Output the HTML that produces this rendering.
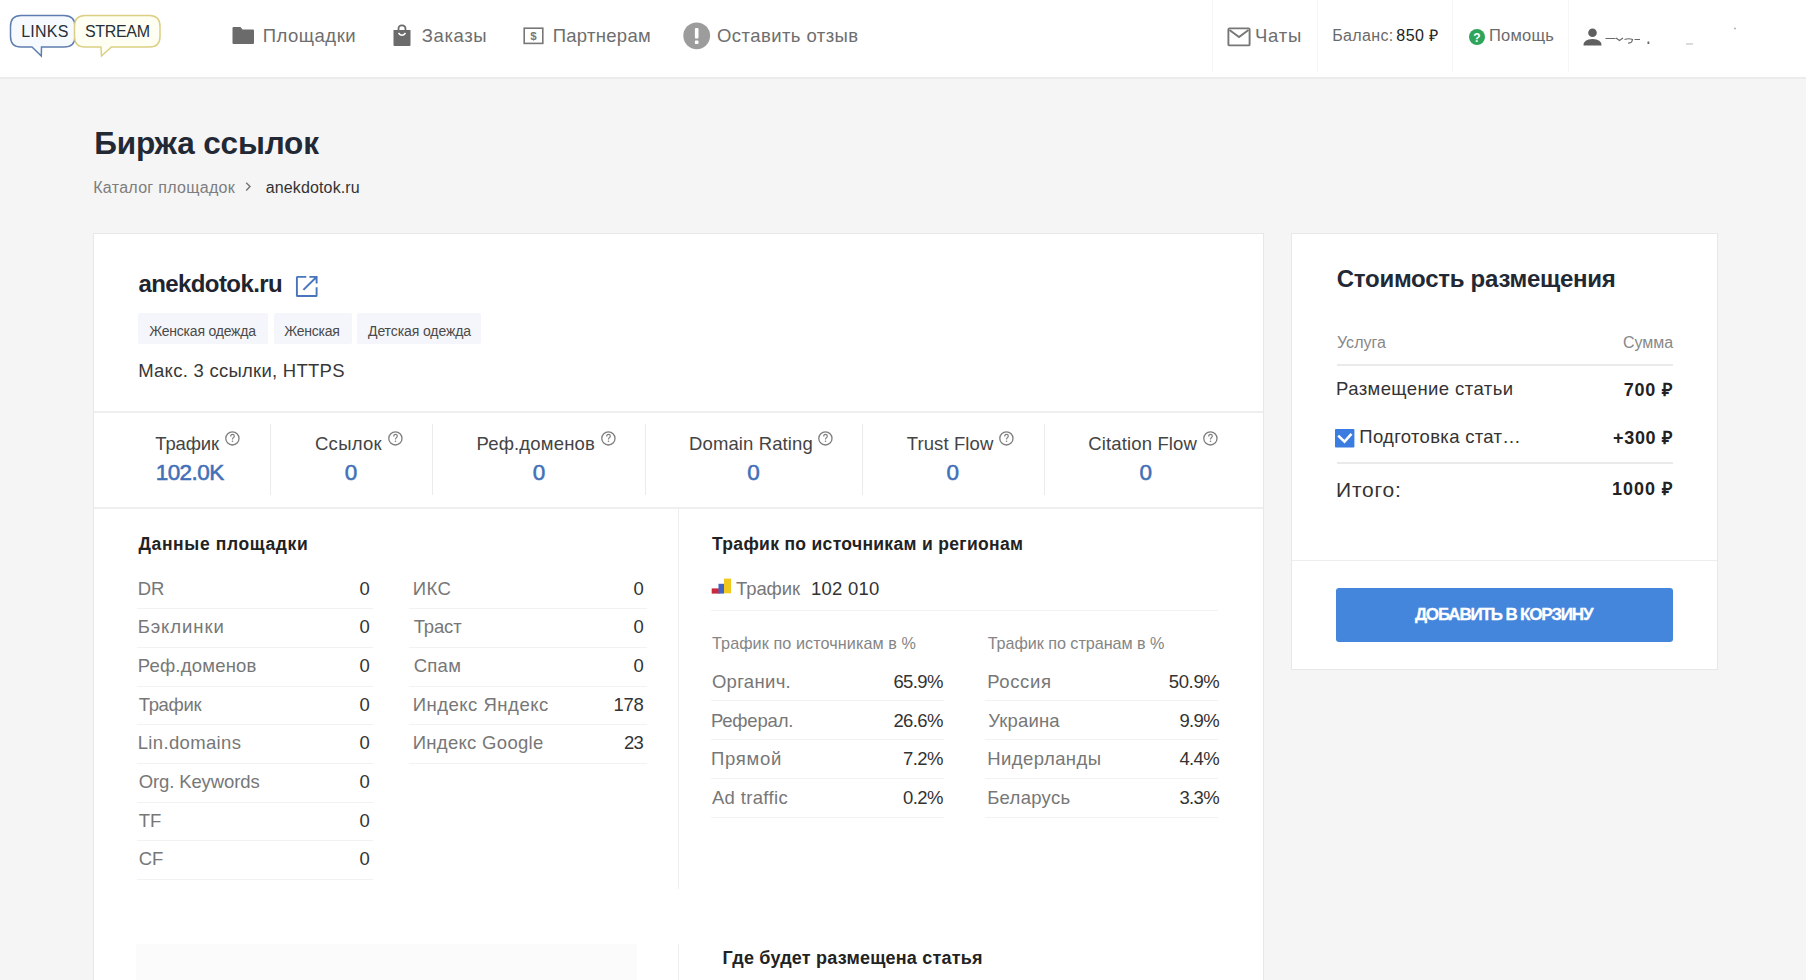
<!DOCTYPE html>
<html><head><meta charset="utf-8"><title>Биржа ссылок</title>
<style>
html,body{margin:0;padding:0;}
body{width:1806px;height:980px;overflow:hidden;position:relative;background:#f5f5f5;font-family:"Liberation Sans", sans-serif;}
.t{position:absolute;white-space:nowrap;}
.a{position:absolute;}
</style></head><body>
<div class="a" style="left:0px;top:0px;width:1806px;height:77px;background:#fff;"></div>
<div class="a" style="left:0px;top:77px;width:1806px;height:2px;background:#ececec;"></div>
<div class="a" style="left:1211.5px;top:0px;width:1px;height:72px;background:#f6f6f6;"></div>
<div class="a" style="left:1316.5px;top:0px;width:1px;height:72px;background:#f6f6f6;"></div>
<div class="a" style="left:1452px;top:0px;width:1px;height:72px;background:#f6f6f6;"></div>
<div class="a" style="left:1568px;top:0px;width:1px;height:72px;background:#f6f6f6;"></div>
<svg class="a" style="left:0;top:0" width="170" height="70" viewBox="0 0 170 70">
<path d="M21 15.6 H64 Q75 15.6 75 26.5 V36.5 Q75 47 64 47 H41.5 L41.3 56 L32 47 H21 Q10.5 47 10.5 36.5 V26.5 Q10.5 15.6 21 15.6 Z" fill="#f6faff" stroke="#5f7db0" stroke-width="1.5"/>
<path d="M85 15.6 H149.5 Q160 15.6 160 26.5 V36.5 Q160 47 149.5 47 H111.5 L101.5 56 L101 47 H85 Q74.5 47 74.5 36.5 V26.5 Q74.5 15.6 85 15.6 Z" fill="#fffef2" stroke="#dccf84" stroke-width="1.5"/>
</svg>
<svg class="a" style="left:232px;top:26px" width="23" height="19" viewBox="0 0 23 19">
<path d="M1.5 1 H8.5 L10.5 3.5 H21 Q22 3.5 22 4.5 V17 Q22 18 21 18 H1.5 Q0.5 18 0.5 17 V2 Q0.5 1 1.5 1 Z" fill="#6b6b6b"/></svg>
<svg class="a" style="left:392px;top:24px" width="20" height="23" viewBox="0 0 20 23">
<path d="M6.5 6 V5 Q6.5 1.3 10 1.3 Q13.5 1.3 13.5 5 V6" fill="none" stroke="#6b6b6b" stroke-width="1.8"/>
<path d="M1.5 6 H18.5 V21 Q18.5 22 17.5 22 H2.5 Q1.5 22 1.5 21 Z" fill="#6b6b6b"/>
<path d="M6.5 9 Q10 13.5 13.5 9" fill="none" stroke="#fff" stroke-width="1.6"/></svg>
<svg class="a" style="left:523px;top:27px" width="21" height="18" viewBox="0 0 21 18">
<rect x="1.2" y="1.2" width="18.6" height="15.2" fill="none" stroke="#777" stroke-width="1.6"/>
<text x="10.5" y="13.3" font-family="Liberation Sans" font-size="11.5" font-weight="700" fill="#777" text-anchor="middle">$</text></svg>
<svg class="a" style="left:683px;top:22px" width="28" height="28" viewBox="0 0 28 28">
<circle cx="13.7" cy="13.8" r="13.4" fill="#9c9c9c"/>
<rect x="11.9" y="6" width="3.6" height="10.5" rx="1" fill="#fff"/><rect x="11.9" y="18.6" width="3.6" height="3.4" rx="0.8" fill="#fff"/></svg>
<svg class="a" style="left:1227px;top:27px" width="24" height="20" viewBox="0 0 24 20">
<rect x="1.4" y="1.4" width="21.2" height="17" rx="1" fill="none" stroke="#777" stroke-width="1.9"/>
<path d="M2.5 3 L12 10 L21.5 3" fill="none" stroke="#777" stroke-width="1.9"/></svg>
<svg class="a" style="left:1468px;top:28px" width="18" height="18" viewBox="0 0 18 18">
<circle cx="9" cy="9" r="8" fill="#2ea55a"/>
<text x="9" y="13.5" font-family="Liberation Sans" font-size="12" font-weight="700" fill="#fff" text-anchor="middle">?</text></svg>
<svg class="a" style="left:1583px;top:28px" width="19" height="19" viewBox="0 0 19 19">
<circle cx="9.5" cy="4.8" r="4.3" fill="#5f5f5f"/>
<path d="M0.5 17.5 Q0.5 11 9.5 11 Q18.5 11 18.5 17.5 Z" fill="#5f5f5f"/></svg>
<svg class="a" style="left:1600px;top:20px" width="150" height="30" viewBox="0 0 150 30">
<path d="M5.5 18.5 H15.5 M16 18 L19.5 20.5 L23 18 M24.5 19.5 Q29 18 32.5 19.5 Q32 23.5 28 23 M34.5 19.5 H40" fill="none" stroke="#6a6a6a" stroke-width="1.2"/>
<rect x="47.5" y="21.5" width="1.8" height="2.5" fill="#666"/>
<rect x="86" y="23.3" width="7" height="1.3" fill="#c9c9c9"/>
<circle cx="135" cy="8.5" r="0.9" fill="#aaa"/>
</svg>
<svg class="a" style="left:243px;top:181px" width="10" height="11" viewBox="0 0 10 11">
<path d="M3.2 1.8 L7 5.6 L3.2 9.4" fill="none" stroke="#747474" stroke-width="1.4"/></svg>
<div class="a" style="left:93px;top:233px;width:1171px;height:760px;background:#fff;box-sizing:border-box;border:1px solid #e8e8e8;"></div>
<svg class="a" style="left:290px;top:268px" width="35" height="35" viewBox="290 268 35 35">
<path d="M306.3 276.9 H297.5 Q296.9 276.9 296.9 277.5 V295.4 Q296.9 296 297.5 296 H316 Q316.6 296 316.6 295.4 V287.2" fill="none" stroke="#4774bb" stroke-width="1.9"/>
<path d="M309.4 276.9 H316.6 V283.4 M303.4 289.9 L316.2 277.3" fill="none" stroke="#4774bb" stroke-width="1.9"/></svg>
<div class="a" style="left:138px;top:313px;width:130px;height:31px;background:#f5f6fb;border-radius:2px;"></div>
<div class="a" style="left:274px;top:313px;width:78px;height:31px;background:#f5f6fb;border-radius:2px;"></div>
<div class="a" style="left:357px;top:313px;width:124px;height:31px;background:#f5f6fb;border-radius:2px;"></div>
<div class="a" style="left:94px;top:411px;width:1169px;height:2px;background:#eeeeee;"></div>
<div class="a" style="left:94px;top:507px;width:1169px;height:2px;background:#eeeeee;"></div>
<div class="a" style="left:269.5px;top:424px;width:1px;height:71px;background:#ebebeb;"></div>
<div class="a" style="left:431.5px;top:424px;width:1px;height:71px;background:#ebebeb;"></div>
<div class="a" style="left:644.5px;top:424px;width:1px;height:71px;background:#ebebeb;"></div>
<div class="a" style="left:861.5px;top:424px;width:1px;height:71px;background:#ebebeb;"></div>
<div class="a" style="left:1043.5px;top:424px;width:1px;height:71px;background:#ebebeb;"></div>
<svg class="a" style="left:225px;top:431px" width="15" height="15" viewBox="0 0 15 15">
<circle cx="7.4" cy="7.4" r="6.6" fill="none" stroke="#7e7e7e" stroke-width="1.3"/>
<path d="M5.7 5.4 Q5.7 3.4 7.5 3.4 Q9.3 3.4 9.3 5 Q9.3 6.1 8.3 6.7 Q7.5 7.2 7.5 8.4" fill="none" stroke="#7e7e7e" stroke-width="1.2"/>
<circle cx="7.5" cy="10.3" r="0.8" fill="#7e7e7e"/></svg>
<svg class="a" style="left:387.5px;top:431px" width="15" height="15" viewBox="0 0 15 15">
<circle cx="7.4" cy="7.4" r="6.6" fill="none" stroke="#7e7e7e" stroke-width="1.3"/>
<path d="M5.7 5.4 Q5.7 3.4 7.5 3.4 Q9.3 3.4 9.3 5 Q9.3 6.1 8.3 6.7 Q7.5 7.2 7.5 8.4" fill="none" stroke="#7e7e7e" stroke-width="1.2"/>
<circle cx="7.5" cy="10.3" r="0.8" fill="#7e7e7e"/></svg>
<svg class="a" style="left:600.5px;top:431px" width="15" height="15" viewBox="0 0 15 15">
<circle cx="7.4" cy="7.4" r="6.6" fill="none" stroke="#7e7e7e" stroke-width="1.3"/>
<path d="M5.7 5.4 Q5.7 3.4 7.5 3.4 Q9.3 3.4 9.3 5 Q9.3 6.1 8.3 6.7 Q7.5 7.2 7.5 8.4" fill="none" stroke="#7e7e7e" stroke-width="1.2"/>
<circle cx="7.5" cy="10.3" r="0.8" fill="#7e7e7e"/></svg>
<svg class="a" style="left:817.5px;top:431px" width="15" height="15" viewBox="0 0 15 15">
<circle cx="7.4" cy="7.4" r="6.6" fill="none" stroke="#7e7e7e" stroke-width="1.3"/>
<path d="M5.7 5.4 Q5.7 3.4 7.5 3.4 Q9.3 3.4 9.3 5 Q9.3 6.1 8.3 6.7 Q7.5 7.2 7.5 8.4" fill="none" stroke="#7e7e7e" stroke-width="1.2"/>
<circle cx="7.5" cy="10.3" r="0.8" fill="#7e7e7e"/></svg>
<svg class="a" style="left:999px;top:431px" width="15" height="15" viewBox="0 0 15 15">
<circle cx="7.4" cy="7.4" r="6.6" fill="none" stroke="#7e7e7e" stroke-width="1.3"/>
<path d="M5.7 5.4 Q5.7 3.4 7.5 3.4 Q9.3 3.4 9.3 5 Q9.3 6.1 8.3 6.7 Q7.5 7.2 7.5 8.4" fill="none" stroke="#7e7e7e" stroke-width="1.2"/>
<circle cx="7.5" cy="10.3" r="0.8" fill="#7e7e7e"/></svg>
<svg class="a" style="left:1203px;top:431px" width="15" height="15" viewBox="0 0 15 15">
<circle cx="7.4" cy="7.4" r="6.6" fill="none" stroke="#7e7e7e" stroke-width="1.3"/>
<path d="M5.7 5.4 Q5.7 3.4 7.5 3.4 Q9.3 3.4 9.3 5 Q9.3 6.1 8.3 6.7 Q7.5 7.2 7.5 8.4" fill="none" stroke="#7e7e7e" stroke-width="1.2"/>
<circle cx="7.5" cy="10.3" r="0.8" fill="#7e7e7e"/></svg>
<div class="a" style="left:678px;top:509px;width:1px;height:380px;background:#eeeeee;"></div>
<div class="a" style="left:678px;top:944px;width:1px;height:40px;background:#eeeeee;"></div>
<div class="a" style="left:137px;top:608px;width:236px;height:1px;background:#f2f2f2;"></div>
<div class="a" style="left:137px;top:647px;width:236px;height:1px;background:#f2f2f2;"></div>
<div class="a" style="left:137px;top:686px;width:236px;height:1px;background:#f2f2f2;"></div>
<div class="a" style="left:137px;top:724px;width:236px;height:1px;background:#f2f2f2;"></div>
<div class="a" style="left:137px;top:763px;width:236px;height:1px;background:#f2f2f2;"></div>
<div class="a" style="left:137px;top:802px;width:236px;height:1px;background:#f2f2f2;"></div>
<div class="a" style="left:137px;top:840px;width:236px;height:1px;background:#f2f2f2;"></div>
<div class="a" style="left:137px;top:879px;width:236px;height:1px;background:#f2f2f2;"></div>
<div class="a" style="left:409px;top:608px;width:238px;height:1px;background:#f2f2f2;"></div>
<div class="a" style="left:409px;top:647px;width:238px;height:1px;background:#f2f2f2;"></div>
<div class="a" style="left:409px;top:686px;width:238px;height:1px;background:#f2f2f2;"></div>
<div class="a" style="left:409px;top:724px;width:238px;height:1px;background:#f2f2f2;"></div>
<div class="a" style="left:409px;top:763px;width:238px;height:1px;background:#f2f2f2;"></div>
<svg class="a" style="left:711px;top:578px" width="21" height="17" viewBox="0 0 21 17">
<rect x="0.7" y="10.4" width="8" height="5.2" fill="#c9283e"/>
<rect x="7.5" y="5.8" width="5.5" height="9.8" fill="#4163c4"/>
<rect x="13" y="0.6" width="7" height="14.7" fill="#f0c81e"/></svg>
<div class="a" style="left:711px;top:610px;width:507px;height:1px;background:#f2f2f2;"></div>
<div class="a" style="left:711px;top:700px;width:233px;height:1px;background:#f2f2f2;"></div>
<div class="a" style="left:985px;top:700px;width:233px;height:1px;background:#f2f2f2;"></div>
<div class="a" style="left:711px;top:739px;width:233px;height:1px;background:#f2f2f2;"></div>
<div class="a" style="left:985px;top:739px;width:233px;height:1px;background:#f2f2f2;"></div>
<div class="a" style="left:711px;top:778px;width:233px;height:1px;background:#f2f2f2;"></div>
<div class="a" style="left:985px;top:778px;width:233px;height:1px;background:#f2f2f2;"></div>
<div class="a" style="left:711px;top:817px;width:233px;height:1px;background:#f2f2f2;"></div>
<div class="a" style="left:985px;top:817px;width:233px;height:1px;background:#f2f2f2;"></div>
<div class="a" style="left:136px;top:944px;width:501px;height:40px;background:#fbfbfc;"></div>
<div class="a" style="left:1291px;top:233px;width:427px;height:437px;background:#fff;box-sizing:border-box;border:1px solid #e8e8e8;"></div>
<div class="a" style="left:1337px;top:364px;width:336px;height:1.5px;background:#eaeaea;"></div>
<div class="a" style="left:1337px;top:462px;width:336px;height:1.5px;background:#eaeaea;"></div>
<div class="a" style="left:1292px;top:559.5px;width:425px;height:1.5px;background:#ededed;"></div>
<svg class="a" style="left:1335.4px;top:429.2px" width="19.4" height="18.6" viewBox="0 0 19.4 18.6">
<rect x="0" y="0" width="19.4" height="18.6" rx="0.8" fill="#3a7ce0"/>
<path d="M3.2 6.6 L9.5 12.6 L16.5 4.8" fill="none" stroke="#fff" stroke-width="2.6"/></svg>
<div class="a" style="left:1336px;top:587.5px;width:337px;height:54px;background:#4486dc;border-radius:3px;"></div>
<div class="t" style="left:262.70px;top:27.34px;font-size:18.5px;line-height:18.5px;color:#6e6e6e;letter-spacing:0.516px;">Площадки</div>
<div class="t" style="left:421.70px;top:27.34px;font-size:18.5px;line-height:18.5px;color:#6e6e6e;letter-spacing:0.615px;">Заказы</div>
<div class="t" style="left:552.70px;top:27.34px;font-size:18.5px;line-height:18.5px;color:#6e6e6e;letter-spacing:0.284px;">Партнерам</div>
<div class="t" style="left:717.00px;top:27.34px;font-size:18.5px;line-height:18.5px;color:#6e6e6e;letter-spacing:0.428px;">Оставить отзыв</div>
<div class="t" style="left:1255.00px;top:27.34px;font-size:18.5px;line-height:18.5px;color:#6e6e6e;letter-spacing:0.771px;">Чаты</div>
<div class="t" style="left:1332.30px;top:28.06px;font-size:16px;line-height:16px;color:#6a6a6a;letter-spacing:0.322px;">Баланс:</div>
<div class="t" style="left:1396.30px;top:28.06px;font-size:16px;line-height:16px;color:#222;letter-spacing:0.465px;">850 ₽</div>
<div class="t" style="left:1489.00px;top:26.83px;font-size:16.5px;line-height:16.5px;color:#6a6a6a;letter-spacing:0.234px;">Помощь</div>
<div class="t" style="left:21.20px;top:23.76px;font-size:16px;line-height:16px;color:#263038;letter-spacing:0.232px;">LINKS</div>
<div class="t" style="left:85.00px;top:23.76px;font-size:16px;line-height:16px;color:#263038;letter-spacing:-0.329px;">STREAM</div>
<div class="t" style="left:94.20px;top:128.34px;font-size:31.5px;line-height:31.5px;color:#222935;font-weight:700;letter-spacing:-0.145px;">Биржа ссылок</div>
<div class="t" style="left:93.20px;top:179.66px;font-size:16px;line-height:16px;color:#7d7d7d;letter-spacing:0.308px;">Каталог площадок</div>
<div class="t" style="left:265.80px;top:179.66px;font-size:16px;line-height:16px;color:#333;letter-spacing:0.126px;">anekdotok.ru</div>
<div class="t" style="left:138.40px;top:272.28px;font-size:24px;line-height:24px;color:#1f2530;font-weight:700;letter-spacing:-0.585px;">anekdotok.ru</div>
<div class="t" style="left:149.20px;top:323.95px;font-size:14px;line-height:14px;color:#4a4a4a;letter-spacing:-0.213px;">Женская одежда</div>
<div class="t" style="left:284.20px;top:323.95px;font-size:14px;line-height:14px;color:#4a4a4a;letter-spacing:-0.249px;">Женская</div>
<div class="t" style="left:368.00px;top:323.95px;font-size:14px;line-height:14px;color:#4a4a4a;letter-spacing:-0.097px;">Детская одежда</div>
<div class="t" style="left:138.20px;top:361.64px;font-size:18.5px;line-height:18.5px;color:#383838;letter-spacing:0.262px;">Макс. 3 ссылки, HTTPS</div>
<div class="t" style="left:155.30px;top:435.34px;font-size:18.5px;line-height:18.5px;color:#444;letter-spacing:-0.139px;">Трафик</div>
<div class="t" style="left:155.70px;top:462.15px;font-size:22.5px;line-height:22.5px;color:#4270b8;letter-spacing:-0.561px;-webkit-text-stroke:0.55px #4270b8;">102.0K</div>
<div class="t" style="left:315.00px;top:435.34px;font-size:18.5px;line-height:18.5px;color:#444;letter-spacing:0.260px;">Ссылок</div>
<div class="t" style="left:344.85px;top:462.15px;font-size:22.5px;line-height:22.5px;color:#4270b8;-webkit-text-stroke:0.55px #4270b8;">0</div>
<div class="t" style="left:476.50px;top:435.34px;font-size:18.5px;line-height:18.5px;color:#444;letter-spacing:0.173px;">Реф.доменов</div>
<div class="t" style="left:532.75px;top:462.15px;font-size:22.5px;line-height:22.5px;color:#4270b8;-webkit-text-stroke:0.55px #4270b8;">0</div>
<div class="t" style="left:689.00px;top:435.34px;font-size:18.5px;line-height:18.5px;color:#444;letter-spacing:0.119px;">Domain Rating</div>
<div class="t" style="left:747.30px;top:462.15px;font-size:22.5px;line-height:22.5px;color:#4270b8;-webkit-text-stroke:0.55px #4270b8;">0</div>
<div class="t" style="left:906.70px;top:435.34px;font-size:18.5px;line-height:18.5px;color:#444;letter-spacing:0.112px;">Trust Flow</div>
<div class="t" style="left:946.50px;top:462.15px;font-size:22.5px;line-height:22.5px;color:#4270b8;-webkit-text-stroke:0.55px #4270b8;">0</div>
<div class="t" style="left:1088.30px;top:435.34px;font-size:18.5px;line-height:18.5px;color:#444;letter-spacing:0.136px;">Citation Flow</div>
<div class="t" style="left:1139.40px;top:462.15px;font-size:22.5px;line-height:22.5px;color:#4270b8;-webkit-text-stroke:0.55px #4270b8;">0</div>
<div class="t" style="left:138.40px;top:535.69px;font-size:17.5px;line-height:17.5px;color:#222;font-weight:700;letter-spacing:0.643px;">Данные площадки</div>
<div class="t" style="left:137.70px;top:579.84px;font-size:18.5px;line-height:18.5px;color:#777;">DR</div>
<div class="t" style="left:359.40px;top:579.84px;font-size:18.5px;line-height:18.5px;color:#333;">0</div>
<div class="t" style="left:137.70px;top:618.49px;font-size:18.5px;line-height:18.5px;color:#777;letter-spacing:0.911px;">Бэклинки</div>
<div class="t" style="left:359.40px;top:618.49px;font-size:18.5px;line-height:18.5px;color:#333;">0</div>
<div class="t" style="left:137.70px;top:657.14px;font-size:18.5px;line-height:18.5px;color:#777;letter-spacing:0.213px;">Реф.доменов</div>
<div class="t" style="left:359.40px;top:657.14px;font-size:18.5px;line-height:18.5px;color:#333;">0</div>
<div class="t" style="left:138.70px;top:695.79px;font-size:18.5px;line-height:18.5px;color:#777;letter-spacing:-0.319px;">Трафик</div>
<div class="t" style="left:359.40px;top:695.79px;font-size:18.5px;line-height:18.5px;color:#333;">0</div>
<div class="t" style="left:137.70px;top:734.44px;font-size:18.5px;line-height:18.5px;color:#777;letter-spacing:0.350px;">Lin.domains</div>
<div class="t" style="left:359.40px;top:734.44px;font-size:18.5px;line-height:18.5px;color:#333;">0</div>
<div class="t" style="left:138.70px;top:773.09px;font-size:18.5px;line-height:18.5px;color:#777;letter-spacing:-0.116px;">Org. Keywords</div>
<div class="t" style="left:359.40px;top:773.09px;font-size:18.5px;line-height:18.5px;color:#333;">0</div>
<div class="t" style="left:138.70px;top:811.74px;font-size:18.5px;line-height:18.5px;color:#777;">TF</div>
<div class="t" style="left:359.40px;top:811.74px;font-size:18.5px;line-height:18.5px;color:#333;">0</div>
<div class="t" style="left:138.70px;top:850.39px;font-size:18.5px;line-height:18.5px;color:#777;">CF</div>
<div class="t" style="left:359.40px;top:850.39px;font-size:18.5px;line-height:18.5px;color:#333;">0</div>
<div class="t" style="left:412.70px;top:579.84px;font-size:18.5px;line-height:18.5px;color:#777;letter-spacing:0.467px;">ИКС</div>
<div class="t" style="left:633.60px;top:579.84px;font-size:18.5px;line-height:18.5px;color:#333;">0</div>
<div class="t" style="left:413.70px;top:618.49px;font-size:18.5px;line-height:18.5px;color:#777;letter-spacing:-0.147px;">Траст</div>
<div class="t" style="left:633.60px;top:618.49px;font-size:18.5px;line-height:18.5px;color:#333;">0</div>
<div class="t" style="left:413.70px;top:657.14px;font-size:18.5px;line-height:18.5px;color:#777;letter-spacing:0.278px;">Спам</div>
<div class="t" style="left:633.60px;top:657.14px;font-size:18.5px;line-height:18.5px;color:#333;">0</div>
<div class="t" style="left:412.70px;top:695.79px;font-size:18.5px;line-height:18.5px;color:#777;letter-spacing:0.504px;">Индекс Яндекс</div>
<div class="t" style="left:613.60px;top:695.79px;font-size:18.5px;line-height:18.5px;color:#333;letter-spacing:-0.289px;">178</div>
<div class="t" style="left:412.70px;top:734.44px;font-size:18.5px;line-height:18.5px;color:#777;letter-spacing:0.304px;">Индекс Google</div>
<div class="t" style="left:624.10px;top:734.44px;font-size:18.5px;line-height:18.5px;color:#333;letter-spacing:-0.789px;">23</div>
<div class="t" style="left:712.00px;top:535.69px;font-size:17.5px;line-height:17.5px;color:#222;font-weight:700;letter-spacing:0.326px;">Трафик по источникам и регионам</div>
<div class="t" style="left:736.00px;top:579.64px;font-size:18.5px;line-height:18.5px;color:#777;letter-spacing:-0.079px;">Трафик</div>
<div class="t" style="left:811.00px;top:579.64px;font-size:18.5px;line-height:18.5px;color:#333;letter-spacing:0.236px;">102 010</div>
<div class="t" style="left:712.00px;top:635.09px;font-size:16.2px;line-height:16.2px;color:#858585;letter-spacing:0.075px;">Трафик по источникам в %</div>
<div class="t" style="left:987.70px;top:635.09px;font-size:16.2px;line-height:16.2px;color:#858585;letter-spacing:-0.053px;">Трафик по странам в %</div>
<div class="t" style="left:711.90px;top:672.84px;font-size:18.5px;line-height:18.5px;color:#777;letter-spacing:0.315px;">Органич.</div>
<div class="t" style="left:893.40px;top:672.84px;font-size:18.5px;line-height:18.5px;color:#333;letter-spacing:-0.602px;">65.9%</div>
<div class="t" style="left:987.20px;top:672.84px;font-size:18.5px;line-height:18.5px;color:#777;letter-spacing:0.610px;">Россия</div>
<div class="t" style="left:1168.80px;top:672.84px;font-size:18.5px;line-height:18.5px;color:#333;letter-spacing:-0.377px;">50.9%</div>
<div class="t" style="left:710.90px;top:711.54px;font-size:18.5px;line-height:18.5px;color:#777;letter-spacing:-0.185px;">Реферал.</div>
<div class="t" style="left:893.40px;top:711.54px;font-size:18.5px;line-height:18.5px;color:#333;letter-spacing:-0.602px;">26.6%</div>
<div class="t" style="left:988.20px;top:711.54px;font-size:18.5px;line-height:18.5px;color:#777;letter-spacing:0.159px;">Украина</div>
<div class="t" style="left:1179.40px;top:711.54px;font-size:18.5px;line-height:18.5px;color:#333;letter-spacing:-0.606px;">9.9%</div>
<div class="t" style="left:710.90px;top:750.24px;font-size:18.5px;line-height:18.5px;color:#777;letter-spacing:0.719px;">Прямой</div>
<div class="t" style="left:903.10px;top:750.24px;font-size:18.5px;line-height:18.5px;color:#333;letter-spacing:-0.606px;">7.2%</div>
<div class="t" style="left:987.20px;top:750.24px;font-size:18.5px;line-height:18.5px;color:#777;letter-spacing:0.452px;">Нидерланды</div>
<div class="t" style="left:1179.40px;top:750.24px;font-size:18.5px;line-height:18.5px;color:#333;letter-spacing:-0.606px;">4.4%</div>
<div class="t" style="left:711.90px;top:788.94px;font-size:18.5px;line-height:18.5px;color:#777;letter-spacing:0.343px;">Ad traffic</div>
<div class="t" style="left:903.10px;top:788.94px;font-size:18.5px;line-height:18.5px;color:#333;letter-spacing:-0.606px;">0.2%</div>
<div class="t" style="left:987.20px;top:788.94px;font-size:18.5px;line-height:18.5px;color:#777;letter-spacing:0.290px;">Беларусь</div>
<div class="t" style="left:1179.40px;top:788.94px;font-size:18.5px;line-height:18.5px;color:#333;letter-spacing:-0.606px;">3.3%</div>
<div class="t" style="left:722.60px;top:948.86px;font-size:18px;line-height:18px;color:#222;font-weight:700;letter-spacing:0.205px;">Где будет размещена статья</div>
<div class="t" style="left:1336.80px;top:267.18px;font-size:24px;line-height:24px;color:#222935;font-weight:700;letter-spacing:-0.267px;">Стоимость размещения</div>
<div class="t" style="left:1337.00px;top:335.16px;font-size:16px;line-height:16px;color:#888;letter-spacing:0.017px;">Услуга</div>
<div class="t" style="left:1622.90px;top:335.16px;font-size:16px;line-height:16px;color:#888;letter-spacing:-0.019px;">Сумма</div>
<div class="t" style="left:1336.00px;top:380.04px;font-size:18.5px;line-height:18.5px;color:#333;letter-spacing:0.413px;">Размещение статьи</div>
<div class="t" style="left:1623.70px;top:380.56px;font-size:18px;line-height:18px;color:#222;font-weight:700;letter-spacing:0.817px;">700 ₽</div>
<div class="t" style="left:1359.30px;top:428.14px;font-size:18.5px;line-height:18.5px;color:#333;letter-spacing:0.308px;">Подготовка стат…</div>
<div class="t" style="left:1613.00px;top:428.76px;font-size:18px;line-height:18px;color:#222;font-weight:700;letter-spacing:0.691px;">+300 ₽</div>
<div class="t" style="left:1336.00px;top:479.12px;font-size:21px;line-height:21px;color:#333;letter-spacing:0.793px;">Итого:</div>
<div class="t" style="left:1612.00px;top:480.06px;font-size:18px;line-height:18px;color:#222;font-weight:700;letter-spacing:0.991px;">1000 ₽</div>
<div class="t" style="left:1414.90px;top:606.01px;font-size:17px;line-height:17px;color:#fff;font-weight:700;letter-spacing:-1.168px;-webkit-text-stroke:0.3px #fff;">ДОБАВИТЬ В КОРЗИНУ</div>
</body></html>
